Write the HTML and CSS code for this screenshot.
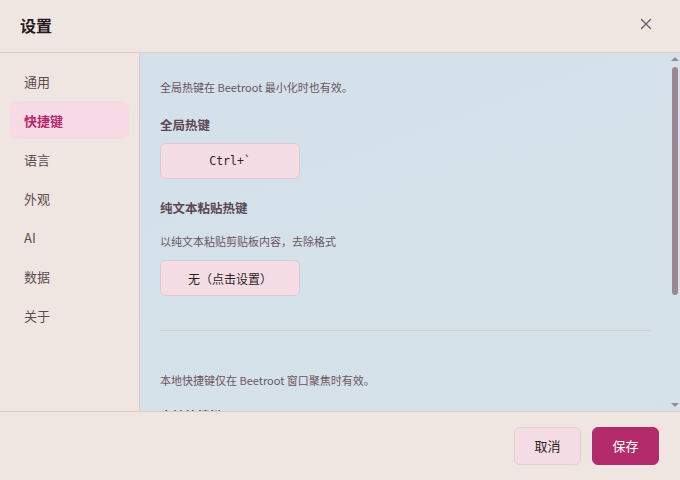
FILE: index.html
```html
<!DOCTYPE html>
<html lang="zh-CN">
<head>
<meta charset="utf-8">
<title>设置</title>
<link rel="stylesheet" href="styles.css">
</head>
<body>
<div class="dialog">
  <header class="header">
    <h1 class="title">设置</h1>
    <button class="close" aria-label="关闭">
      <svg width="12" height="12" viewBox="0 0 12 12"><path d="M1.5 1.5 L10.5 10.5 M10.5 1.5 L1.5 10.5" stroke="#6e5c66" stroke-width="1.4" fill="none" stroke-linecap="round"/></svg>
    </button>
  </header>
  <div class="main">
    <nav class="sidebar">
      <div class="nav-item">通用</div>
      <div class="nav-item active">快捷键</div>
      <div class="nav-item">语言</div>
      <div class="nav-item">外观</div>
      <div class="nav-item">AI</div>
      <div class="nav-item">数据</div>
      <div class="nav-item">关于</div>
    </nav>
    <div class="content-wrap">
      <section class="content">
        <p class="desc first">全局热键在 Beetroot 最小化时也有效。</p>
        <h2 class="heading h-first">全局热键</h2>
        <button class="key-btn mono">Ctrl+`</button>
        <h2 class="heading h-second">纯文本粘贴热键</h2>
        <p class="desc sub">以纯文本粘贴剪贴板内容，去除格式</p>
        <button class="key-btn after-desc">无（点击设置）</button>
        <hr class="divider">
        <p class="desc local">本地快捷键仅在 Beetroot 窗口聚焦时有效。</p>
        <h2 class="heading h-third">本地快捷键</h2>
      </section>
      <div class="scrollbar" aria-hidden="true">
        <span class="arrow up"></span>
        <span class="thumb"></span>
        <span class="arrow down"></span>
      </div>
    </div>
  </div>
  <footer class="footer">
    <button class="btn cancel">取消</button>
    <button class="btn save">保存</button>
  </footer>
</div>
</body>
</html>
```

FILE: styles.css
```css
* { box-sizing: border-box; }
html, body { margin: 0; padding: 0; }
body {
  width: 680px;
  height: 480px;
  overflow: hidden;
  font-family: "Segoe UI", "Noto Sans", "Noto Sans CJK SC", sans-serif;
  background: #f0e6e1;
  color: #5a4a50;
}
.dialog {
  height: 480px;
  display: flex;
  flex-direction: column;
}
.header {
  height: 53px;
  flex: none;
  display: flex;
  align-items: center;
  justify-content: space-between;
  padding: 0 28px 0 20px;
  border-bottom: 1px solid #dccbc6;
}
.title {
  margin: 0;
  font-size: 16px;
  font-weight: 700;
  color: #241a1d;
  font-family: "Noto Sans CJK SC", sans-serif;
  padding-bottom: 2px;
}
.close {
  border: 0;
  background: none;
  padding: 0;
  width: 12px;
  height: 12px;
  display: flex;
  margin-bottom: 4px;
}
.main {
  flex: 1;
  display: flex;
  min-height: 0;
}
.sidebar {
  width: 140px;
  flex: none;
  padding: 9px 10px 0 10px;
  border-right: 1px solid #dccbc6;
  display: flex;
  flex-direction: column;
  gap: 1px;
}
.nav-item {
  height: 38px;
  display: flex;
  align-items: center;
  padding-left: 14px;
  font-size: 13px;
  font-family: "Noto Sans CJK SC", sans-serif;
  color: #5c4b53;
  border-radius: 7px;
}
.nav-item.active {
  background: #f6dbe6;
  color: #b6286a;
  font-weight: 700;
}
.content-wrap {
  flex: 1;
  min-width: 0;
  position: relative;
  background: linear-gradient(160deg, #d3e0ea 0%, #d6e2ea 60%, #d3e1e9 100%);
}
.content {
  height: 100%;
  overflow: hidden;
  padding: 26px 30px 0 20px;
  display: flex;
  flex-direction: column;
  align-items: flex-start;
}
.scrollbar {
  position: absolute;
  top: 0;
  right: 0;
  bottom: 0;
  width: 10px;
  display: flex;
  flex-direction: column;
  align-items: center;
  padding: 3px 0 3px 0;
}
.arrow {
  width: 0;
  height: 0;
  border-left: 4px solid transparent;
  border-right: 4px solid transparent;
  flex: none;
}
.arrow.up { border-bottom: 4px solid #9c8892; margin-top: 1px; }
.arrow.down { border-top: 4px solid #9c8892; margin-top: auto; margin-bottom: 1px; }
.thumb {
  width: 6px;
  height: 228px;
  margin-top: 6px;
  border-radius: 3px;
  background: #9c8892;
  flex: none;
}
.desc {
  margin: 0;
  font-size: 11px;
  line-height: 16px;
  color: #6a5560;
  font-family: "Noto Sans CJK SC", sans-serif;
}
.heading {
  margin: 0;
  font-size: 12.5px;
  line-height: 18px;
  font-weight: 700;
  color: #5b4850;
  font-family: "Noto Sans CJK SC", sans-serif;
  flex: none;
}
.h-first { margin-top: 21px; margin-bottom: 9px; }
.h-second { margin-top: 20px; }
.desc.sub { margin-top: 16px; margin-bottom: 11px; }
.h-third { margin-top: 19px; }
.key-btn {
  width: 140px;
  height: 36px;
  flex: none;
  border: 1px solid #e1c8cf;
  border-radius: 6px;
  background: #f5dde6;
  color: #2a1f23;
  font-size: 12px;
  font-family: "Noto Sans CJK SC", sans-serif;
  padding: 0;
}
.mono { font-family: "DejaVu Sans Mono", "Liberation Mono", monospace; font-size: 11.5px; }
.divider {
  width: 100%;
  margin: 34px 0 0 0;
  border: 0;
  border-top: 1px solid #dccbc6;
  height: 0;
  flex: none;
}
.desc.local { margin-top: 41px; }
.footer {
  height: 69px;
  flex: none;
  border-top: 1px solid #dccbc6;
  display: flex;
  justify-content: flex-end;
  align-items: flex-start;
  gap: 11px;
  padding: 15px 21px 0 0;
}
.btn {
  width: 67px;
  height: 38px;
  border-radius: 6px;
  font-size: 13px;
  line-height: 18px;
  font-family: "Noto Sans CJK SC", sans-serif;
  padding: 0;
  display: flex;
  align-items: center;
  justify-content: center;
}
.cancel {
  background: #f5dde6;
  border: 1px solid #e3cdd3;
  color: #2a1f23;
}
.save {
  background: #b42b6b;
  border: 1px solid #b42b6b;
  color: #ffffff;
}
```
